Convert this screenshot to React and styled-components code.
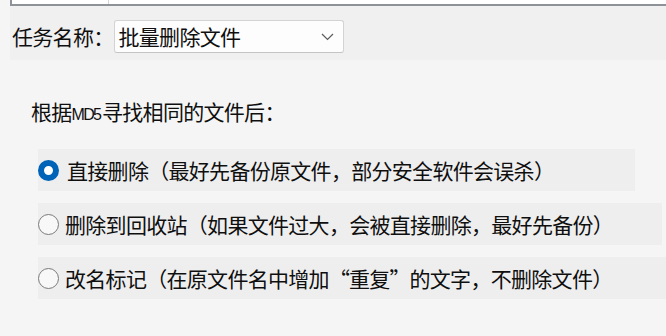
import React from "react";
import styled, { createGlobalStyle } from "styled-components";

const Global = createGlobalStyle`
  html, body { margin: 0; padding: 0; }
  body {
    background: #f5f5f5;
    font-family: "Noto Sans CJK SC", "Noto Sans", sans-serif;
    color: #0f0f0f;
    width: 666px;
    height: 336px;
    overflow: hidden;
  }
`;

const Page = styled.div`
  display: flex;
  flex-direction: column;
  width: 666px;
  height: 336px;
  overflow: hidden;
`;

const TopArea = styled.div`
  margin-left: 10px;
  display: flex;
  flex-direction: column;
`;

const TopBox = styled.div`
  height: 4px;
  background: #ffffff;
  border-left: 2px solid #8e9299;
  border-bottom: 2px solid #8e9299;
  display: flex;
`;

const TopCell = styled.div`
  width: 96px;
  border-right: 1px solid #d6d6d6;
`;

const Band = styled.div`
  height: 54px;
  box-sizing: border-box;
  background: #f0f0f0;
  display: flex;
  align-items: flex-start;
  padding: 14px 0 0 2px;
`;

const Text = styled.span`
  font-size: 21px;
  letter-spacing: -0.7px;
  white-space: nowrap;
`;

const Label = styled(Text)`
  line-height: 33px;
  height: 33px;
`;

const Combo = styled.div`
  width: 230px;
  height: 33px;
  box-sizing: border-box;
  background: #fdfdfd;
  border: 1px solid #d3d3d3;
  border-bottom-color: #c4c4c4;
  border-radius: 3px;
  display: flex;
  align-items: center;
  justify-content: space-between;
  padding: 0 9px 0 4px;
`;

const ComboText = styled(Text)`
  line-height: 31px;
`;

const Body = styled.div`
  display: flex;
  flex-direction: column;
  padding: 38px 0 0 31px;
`;

const Heading = styled(Text)`
  display: block;
  line-height: 26px;
  height: 26px;
`;

const Small = styled.span`
  font-family: "Liberation Sans", sans-serif;
  font-size: 16px;
  letter-spacing: -1.8px;
  margin-right: 2px;
`;

const Quote = styled.span`
  display: inline-block;
  width: 20px;
  text-align: ${(p) => (p.$open ? "right" : "left")};
`;

const Options = styled.div`
  display: flex;
  flex-direction: column;
  gap: 12px;
  margin-top: 25px;
  margin-left: 7px;
`;

const Row = styled.label`
  width: ${(p) => p.$w}px;
  height: 42px;
  background: #eeeeee;
  display: flex;
  align-items: center;
  gap: ${(p) => (p.$checked ? 8 : 6)}px;
  white-space: nowrap;
  flex-shrink: 0;
`;

const Radio = styled.span`
  width: 21px;
  height: 21px;
  box-sizing: border-box;
  border-radius: 50%;
  flex-shrink: 0;
  ${(p) =>
    p.$checked
      ? `background: #ffffff; border: 6.5px solid #0063b8;`
      : `background: #f8f8f8; border: 1.5px solid #7a7a7a;`}
`;

const RowText = styled(Text)`
  line-height: 26px;
`;

const Chevron = () => (
  <svg width="13" height="8" viewBox="0 0 13 8">
    <polyline
      points="1,1 6.5,6.5 12,1"
      fill="none"
      stroke="#5c5c5c"
      strokeWidth="1.2"
    />
  </svg>
);

const options = [
  { w: 597, checked: true, text: "直接删除（最好先备份原文件，部分安全软件会误杀）" },
  { w: 624, checked: false, text: "删除到回收站（如果文件过大，会被直接删除，最好先备份）" },
  {
    w: 640,
    checked: false,
    text: (
      <>
        改名标记（在原文件名中增加<Quote $open>“</Quote>重复<Quote>”</Quote>的文字，不删除文件）
      </>
    ),
  },
];

export default function App() {
  return (
    <Page lang="zh-CN">
      <Global />
      <TopArea>
        <TopBox>
          <TopCell />
        </TopBox>
        <Band>
          <Label>任务名称：</Label>
          <Combo>
            <ComboText>批量删除文件</ComboText>
            <Chevron />
          </Combo>
        </Band>
      </TopArea>
      <Body>
        <Heading>
          根据<Small>MD5</Small>寻找相同的文件后：
        </Heading>
        <Options>
          {options.map((o, i) => (
            <Row key={i} $w={o.w} $checked={o.checked}>
              <Radio $checked={o.checked} />
              <RowText>{o.text}</RowText>
            </Row>
          ))}
        </Options>
      </Body>
    </Page>
  );
}
